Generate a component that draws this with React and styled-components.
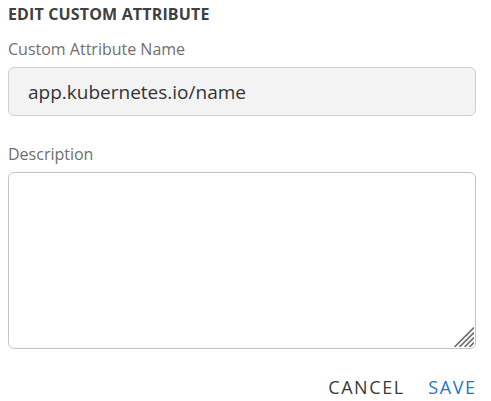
import React from "react";
import styled, { createGlobalStyle } from "styled-components";

const Global = createGlobalStyle`
  html, body { margin: 0; padding: 0; background: #fff; }
  body { font-family: "Open Sans", "Liberation Sans", sans-serif; }
  * { box-sizing: border-box; }
`;

const Panel = styled.div`
  width: 491px;
  padding: 3px 15px 0 8px;
  display: flex;
  flex-direction: column;
`;

const Title = styled.h2`
  margin: 0;
  font-size: 16px;
  line-height: 22px;
  font-weight: 700;
  color: #404040;
  letter-spacing: 0.15px;
`;

const Field = styled.div`
  display: flex;
  flex-direction: column;
  margin-top: ${(p) => p.$top}px;
`;

const Label = styled.label`
  font-size: 16px;
  line-height: 22px;
  color: #707070;
  margin-bottom: 7px;
`;

const TextInput = styled.input`
  height: 49px;
  width: 100%;
  border: 1px solid #cfcfcf;
  border-radius: 6px;
  background: #f3f3f3;
  padding: 0 19px;
  font-family: inherit;
  font-size: 19px;
  color: #333;
  outline: none;
`;

const AreaWrap = styled.div`
  position: relative;
`;

const TextArea = styled.textarea`
  height: 177px;
  width: 100%;
  border: 1px solid #c4c4c4;
  border-radius: 6px;
  background: #fff;
  padding: 10px 16px;
  font-family: inherit;
  font-size: 16px;
  resize: none;
  outline: none;
  display: block;
`;

const Grip = styled.svg`
  position: absolute;
  right: 2px;
  bottom: 2px;
  width: 20px;
  height: 20px;
  pointer-events: none;
`;

const Actions = styled.div`
  display: flex;
  justify-content: flex-end;
  gap: 25px;
  margin-top: 26px;
  padding-right: 1px;
`;

const Button = styled.button`
  background: none;
  border: none;
  padding: 0;
  font-family: inherit;
  font-size: 18px;
  line-height: 24px;
  letter-spacing: 1.6px;
  margin-right: -1.6px;
  text-transform: uppercase;
  color: ${(p) => (p.$primary ? "#1b78c8" : "#3a3a3a")};
  cursor: pointer;
`;

export default function App() {
  return (
    <>
      <Global />
      <Panel>
        <Title>EDIT CUSTOM ATTRIBUTE</Title>
        <Field $top={13}>
          <Label>Custom Attribute Name</Label>
          <TextInput defaultValue="app.kubernetes.io/name" />
        </Field>
        <Field $top={27}>
          <Label>Description</Label>
          <AreaWrap>
            <TextArea />
            <Grip viewBox="0 0 20 20">
              <g stroke="#6e6e6e" strokeWidth="1.7" strokeLinecap="round">
                <line x1="1" y1="19.5" x2="19.5" y2="1" />
                <line x1="6" y1="19.5" x2="19.5" y2="6" />
                <line x1="11" y1="19.5" x2="19.5" y2="11" />
                <line x1="16" y1="19.5" x2="19.5" y2="16" />
              </g>
            </Grip>
          </AreaWrap>
        </Field>
        <Actions>
          <Button>Cancel</Button>
          <Button $primary>Save</Button>
        </Actions>
      </Panel>
    </>
  );
}
